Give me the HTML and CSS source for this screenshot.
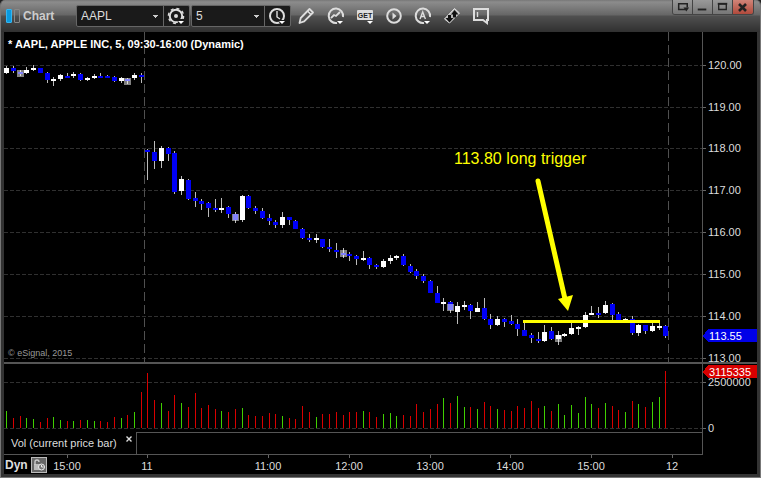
FILE: index.html
```html
<!DOCTYPE html>
<html lang="en">
<head>
  <meta charset="UTF-8">
  <meta name="viewport" content="width=device-width, initial-scale=1.0">
  <title>Chart</title>
  <link rel="stylesheet" href="styles.css">
</head>
<body>
  <div class="window">
    <header class="titlebar">
      <span class="logo"><i class="bar-on"></i><i class="bar-off"></i></span>
      <h1>Chart</h1>

      <div class="group symbol">
        <select aria-label="Symbol"><option>AAPL</option></select>
        <button type="button" aria-label="Settings">
          <svg viewBox="0 0 20 20"><circle cx="9" cy="9" r="6.2" fill="none" stroke="#ddd" stroke-width="2"/><circle cx="9" cy="9" r="7.6" fill="none" stroke="#ddd" stroke-width="1.4" stroke-dasharray="3 3"/><circle cx="9" cy="9" r="2" fill="#ddd"/><path d="M10 12h9v4l-3 3h-4z" fill="#1a1a1a"/><path d="M11 14h6l-3 3z" fill="#fff"/></svg>
        </button>
      </div>
      <div class="group interval">
        <select aria-label="Interval"><option>5</option></select>
        <button type="button" aria-label="Time template">
          <svg viewBox="0 0 20 20"><circle cx="9" cy="9" r="7" fill="none" stroke="#ddd" stroke-width="2"/><path d="M9 4v6l3 2" fill="none" stroke="#ddd" stroke-width="1.4"/><path d="M10 13h9v3l-3 3h-3z" fill="#1a1a1a"/><path d="M11 14h6l-3 3z" fill="#fff"/></svg>
        </button>
      </div>

      <nav class="tools">
        <button type="button" aria-label="Draw">
          <svg viewBox="0 0 20 20"><path d="M2.500 17l1.200-5L12.500 3l3.500 3.500-8.800 8.800z" fill="#555" stroke="#ddd" stroke-width="1.800" stroke-linejoin="round"/><path d="M10.500 5l3.500 3.500" stroke="#ddd" stroke-width="1.600"/></svg>
        </button>
        <button type="button" aria-label="Studies">
          <svg viewBox="0 0 20 20"><path d="M11 16.900A7.200 7.200 0 1 1 17 11" fill="none" stroke="#ddd" stroke-width="2"/><path d="M5 12l3-3 2 1 4-4" fill="none" stroke="#ddd" stroke-width="1.800"/><path d="M11 15h6l-3 3z" fill="#fff"/></svg>
        </button>
        <button type="button" aria-label="Get">
          <svg viewBox="0 0 20 20"><rect x="2" y="4" width="16" height="10" rx="1" fill="#ddd"/><text x="10" y="12" text-anchor="middle" class="get">GET</text><path d="M12 15h6l-3 3z" fill="#fff"/></svg>
        </button>
        <button type="button" aria-label="Play">
          <svg viewBox="0 0 20 20"><circle cx="10" cy="10" r="6.800" fill="none" stroke="#ddd" stroke-width="2"/><path d="M8.500 6.500v7l4-3.500z" fill="#ddd"/></svg>
        </button>
        <button type="button" aria-label="Alerts">
          <svg viewBox="0 0 20 20"><path d="M11 16.900A7.200 7.200 0 1 1 17 11" fill="none" stroke="#ddd" stroke-width="2"/><path d="M7 13l2.700-7 2.700 7M8 10.500h3.500" fill="none" stroke="#ddd" stroke-width="1.400"/><path d="M11 15h6l-3 3z" fill="#fff"/></svg>
        </button>
        <button type="button" aria-label="Trade">
          <svg viewBox="0 0 20 20"><path d="M2.500 13L12.500 2.500l5 4.500L7.500 17z" fill="#bbb" stroke="#ddd"/><path d="M12.500 4l4 4.500h-2.500v3h-3v-3H9zM7.500 16.500L3.500 12H6V9h3v3h2.500z" fill="#111"/></svg>
        </button>
        <button type="button" aria-label="Notes">
          <svg viewBox="0 0 20 20"><path d="M3 3h14v11h-1v3l-4-3H3z" fill="none" stroke="#ddd" stroke-width="2"/><path d="M6.500 6v5" stroke="#ddd" stroke-width="1.400"/></svg>
        </button>
      </nav>

      <div class="window-buttons">
        <button type="button" aria-label="Dock"><svg viewBox="0 0 20 14"><path d="M13 10H6V4h9v4" fill="none" stroke="#222" stroke-width="1.600"/><path d="M11 8h6l-3 4z" fill="#222"/></svg></button>
        <button type="button" aria-label="Minimize"><svg viewBox="0 0 20 14"><path d="M5 10h9" stroke="#222" stroke-width="2"/></svg></button>
        <button type="button" aria-label="Maximize"><svg viewBox="0 0 20 14"><path d="M6 4h8v6H6z" fill="none" stroke="#222" stroke-width="1.400"/><path d="M5 4h10" stroke="#222" stroke-width="2"/></svg></button>
        <button type="button" class="close" aria-label="Close"><svg viewBox="0 0 20 14"><path d="M6 4l7 7M13 4l-7 7" stroke="#222" stroke-width="2.600"/></svg></button>
      </div>
    </header>

    <main class="chart">
      <div class="pane price-pane">
        <svg id="price"></svg>
        <h2>* AAPL, APPLE INC, 5, 09:30-16:00 (Dynamic)</h2>
        <small>© eSignal, 2015</small>
      </div>
      <div class="axis price-axis"><svg id="priceAxis"></svg></div>

      <div class="pane volume-pane"><svg id="volume"></svg></div>
      <div class="axis"><svg id="volumeAxis"></svg></div>

      <div class="tabs">
        <div class="tab">Vol (current price bar)<button type="button" aria-label="Close tab"><svg viewBox="0 0 6 6"><path d="M.5.500l5 5M5.500.500l-5 5" stroke="#ddd" stroke-width="1.400"/></svg></button></div>
        <div class="tab-rest"></div>
      </div>
      <div class="axis"></div>

      <div class="time">
        <svg id="timeAxis"></svg>
        <div class="mode">
          <b>Dyn</b>
          <button type="button" aria-label="Lock time"><svg viewBox="0 0 14 14"><path d="M2 6h7v6H2z" fill="#bbb"/><path d="M3 7V4q0-2 2-2t2 2" fill="none" stroke="#ccc" stroke-width="1.400"/><circle cx="9.500" cy="9" r="3" fill="#777" stroke="#eee"/><path d="M9.500 7v2h2" fill="none" stroke="#eee"/></svg></button>
        </div>
      </div>
    </main>
  </div>
  <script src="chart.js"></script>
</body>
</html>
```

FILE: styles.css
```css
* {
  box-sizing: border-box;
}

body {
  margin: 0;
  background: #222;
  color: #ddd;
  font-family: "Liberation Sans", Arial, sans-serif;
  font-size: 11px;
}

h1, h2 {
  margin: 0;
}

button, select {
  margin: 0;
  padding: 0;
  border: 0;
  background: none;
  color: inherit;
  font-family: inherit;
}

svg {
  display: block;
}

.window {
  display: flex;
  flex-direction: column;
  height: 100vh;
  overflow: hidden;
  border-radius: 5px 5px 0 0;
  background: #333;
  border: 1px solid #777;
  border-top: 0;
}

/* title bar */
.titlebar {
  display: flex;
  align-items: center;
  flex: none;
  height: 32px;
  padding: 0 6px 0 5px;
  background: linear-gradient(#777 0, #8c8c8c 2px, #666 15px, #505050 16px, #303030 32px);
}

.logo {
  display: flex;
  gap: 2px;
}

.logo i {
  width: 6px;
  height: 14px;
  border: 1px solid #888;
  border-radius: 1px;
}

.logo .bar-on {
  background: #0a9ae0;
  border-color: #35b5f0;
}

.titlebar h1 {
  width: 56px;
  padding-left: 3px;
  font-size: 12px;
  color: #ccc;
}

.group {
  display: flex;
  height: 22px;
  margin-right: 1px;
  border: 1px solid #666;
  border-radius: 2px;
  background: #1a1a1a;
}

.symbol {
  width: 114px;
}

.interval {
  width: 100px;
}

.group select {
  flex: 1;
  min-width: 0;
  padding-left: 4px;
  appearance: none;
  font-size: 12px;
  background: linear-gradient(#ccc, #ccc) no-repeat right 5px top 9px / 5px 1px,
    linear-gradient(#ccc, #ccc) no-repeat right 6px top 10px / 3px 1px,
    linear-gradient(#ccc, #ccc) no-repeat right 7px top 11px / 1px 1px;
}

.group button {
  width: 26px;
  padding: 1px 0 0 3px;
  border-left: 1px solid #666;
}

.group svg, .tools svg {
  width: 20px;
  height: 20px;
}

.tools {
  display: flex;
}

.tools button {
  display: grid;
  place-items: center;
  width: 29px;
  height: 22px;
}

.get {
  font: bold 7px "Liberation Sans", Arial, sans-serif;
  fill: #222;
}

.window-buttons {
  display: flex;
  align-self: flex-start;
  margin-left: auto;
  border: 1px solid #444;
  border-top: 0;
  border-radius: 0 0 3px 3px;
  overflow: hidden;
}

.window-buttons button {
  width: 20px;
  height: 14px;
  background: linear-gradient(#999, #777);
  border-right: 1px solid #444;
}

.window-buttons .close {
  background: linear-gradient(#d08478, #b04a3c);
  border-right: 0;
}

/* chart */
.chart {
  display: grid;
  grid-template-columns: 1fr 55px;
  grid-template-rows: 1fr 68px 23px 19px;
  flex: 1;
  min-height: 0;
  margin: 0 3px 3px;
  background: #000;
}

.chart > div {
  position: relative;
  min-width: 0;
  min-height: 0;
}

.pane svg, .axis svg, .time > svg {
  position: absolute;
  inset: 0;
  width: 100%;
  height: 100%;
  overflow: visible;
  shape-rendering: crispEdges;
}

.price-pane, .price-axis {
  border-bottom: 2px solid #555;
}

.price-pane {
  display: flex;
  flex-direction: column;
  justify-content: space-between;
  padding: 6px 4px 2px;
}

.price-pane h2, .price-pane small {
  position: relative;
  font-size: 11px;
  line-height: 13px;
}

.price-pane h2 {
  color: #fff;
}

.price-pane small {
  font-size: 9px;
  color: #999;
}

.axis {
  border-left: 1px solid #555;
}

.tabs {
  display: flex;
  border-bottom: 1px solid #555;
}

.tab {
  display: flex;
  gap: 9px;
  width: 132px;
  padding-left: 7px;
  line-height: 22px;
  white-space: nowrap;
}

.tab svg {
  width: 6px;
  height: 6px;
}

.tab button {
  height: 14px;
}

.tab-rest {
  flex: 1;
  border-top: 1px solid #555;
  border-left: 1px solid #555;
}

.time {
  grid-column: span 2;
}

.mode {
  display: flex;
  align-items: center;
  gap: 3px;
  height: 19px;
  padding-left: 1px;
  position: relative;
  width: 44px;
  font-size: 12px;
}

.mode button {
  width: 16px;
  height: 16px;
  border: 1px solid #bbb;
  background: #666;
}

text {
  font-size: 11px;
  fill: #ddd;
}

.grid {
  stroke: #303030;
  stroke-dasharray: 4 2;
}

.session {
  stroke: #505050;
  stroke-dasharray: 9 4;
}

.tick {
  stroke: #666;
}

.wick {
  fill: #bbb;
}

.w {
  fill: #fff;
}

.b {
  fill: #0000f5;
}

.marker {
  fill: #fff;
  fill-opacity: 0.5;
}

.r {
  fill: #d80000;
}

.g {
  fill: #40d000;
}

.level {
  fill: #ff0;
}

.arrow {
  fill: #ff0;
  stroke: #ff0;
  stroke-width: 5;
  stroke-linecap: round;
  shape-rendering: auto;
}

.arrow-head {
  fill: #ff0;
  shape-rendering: auto;
}

.note {
  font-size: 16px;
  fill: #ff0;
}

.tag-text {
  fill: #fff;
}

.tag-blue {
  fill: #0000e8;
}

.tag-red {
  fill: #d80000;
}
```

FILE: chart.js
```js
// chart units: x runs 4..702, price pane y 32..362, volume pane y 364..432
// each candle: high, top, bottom, low, color, optional marker top
const candles = [
  [66,68,73,74,'w'], [66,68,71,73,'b'], [70,72,74,76,'b',70], [67,70,73,74,'w'], [65,68,70,71,'w'],
  [68,68,73,73,'b'], [72,73,80,83,'b'], [77,79,81,86,'w'], [74,75,79,81,'w'], [73,76,78,78,'b'],
  [72,74,76,78,'w'], [73,74,80,81,'b'], [77,78,80,81,'w'], [74,76,78,79,'w'], [73,76,78,78,'b'],
  [75,76,78,78,'b'], [76,77,81,82,'b'], [77,78,81,83,'w'], [78,79,81,84,'b',78], [73,75,78,80,'w'],
  [73,75,77,83,'b'], [149,150,152,180,'b'], [141,152,161,169,'b'], [146,148,161,168,'w'], [147,148,154,161,'b'],
  [151,153,192,194,'b'], [176,179,191,195,'w'], [179,180,199,200,'b'], [192,198,201,207,'b'], [199,201,204,210,'b'],
  [202,203,208,217,'b'], [199,208,210,212,'b'], [198,208,210,213,'w'], [206,207,214,218,'b'], [212,214,220,223,'b',214],
  [195,196,220,222,'w'], [195,196,208,209,'b'], [206,208,211,214,'b'], [208,211,218,219,'b'], [214,218,221,225,'b'],
  [220,222,225,228,'b'], [212,217,225,228,'w'], [217,217,220,225,'b'], [220,221,229,229,'b'], [228,229,238,239,'b'],
  [234,238,240,242,'b'], [234,238,240,243,'w'], [239,239,247,248,'b'], [239,247,249,252,'b'], [243,250,252,258,'b'],
  [248,253,255,258,'b',250], [252,254,256,261,'b'], [255,256,259,265,'b'], [251,258,260,261,'w'], [257,258,265,269,'b'],
  [264,265,267,269,'b'], [259,261,267,268,'w'], [255,258,261,264,'w'], [255,256,258,260,'w'], [254,256,265,266,'b'],
  [264,266,272,273,'b'], [269,271,276,279,'b'], [274,276,281,283,'b'], [280,281,293,293,'b'], [286,293,303,303,'b'],
  [298,302,304,311,'w'], [301,302,310,313,'b',304], [302,306,312,324,'w'], [301,305,307,310,'w'], [304,305,311,319,'b'],
  [302,308,312,312,'w'], [298,308,319,320,'b'], [314,319,325,329,'b'], [316,319,325,326,'w'], [318,319,322,327,'b'],
  [315,321,324,325,'b'], [319,324,329,336,'b'], [322,330,336,336,'b'], [333,335,338,343,'b'], [332,339,341,343,'b'],
  [325,332,341,342,'w'], [327,331,339,340,'b'], [331,335,339,345,'w',335], [333,334,336,337,'w'], [322,328,334,335,'w'],
  [326,327,329,335,'w'], [312,315,327,328,'w'], [306,313,315,315,'w'], [307,313,315,318,'b'], [301,305,313,314,'w'],
  [303,304,315,320,'b'], [312,314,320,320,'b'], [318,319,321,321,'w'], [316,319,333,335,'b'], [324,325,333,336,'w'],
  [325,325,331,334,'b'], [323,326,331,332,'w'], [323,326,328,330,'w'], [325,326,336,338,'b']
];

const volumeTops = [
  411,418,416,418,419,422,418,417,420,421,421,420,420,421,421,422,417,418,415,412,392,
  373,400,403,411,395,403,407,393,408,405,409,411,412,409,408,415,416,416,413,414,416,
  418,419,406,412,417,414,414,412,415,412,412,411,412,417,414,413,416,415,416,404,412,
  409,404,398,403,396,407,407,409,402,406,409,410,411,406,408,401,408,406,411,404,415,
  405,413,397,404,408,403,406,410,412,401,404,407,402,397,371
];
const volumeColors =
  'grrggrrggrgrggrrrgrgr' +
  'rrgrrgrrrrrgrrgrrrrrg' +
  'rrrrgrrrrrrgrrgggrrrr' +
  'rrgrggrgrrgrrrrrrgrgg' +
  'ggggrgrrgrgrggr';

const times = [[67, '15:00'], [147, '11'], [268, '11:00'], [349, '12:00'], [430, '13:00'], [510, '14:00'], [591, '15:00'], [672, '12']];
const prices = [[65, '120.00'], [107, '119.00'], [148, '118.00'], [190, '117.00'], [232, '116.00'], [274, '115.00'], [316, '114.00'], [358, '113.00']];
const volumes = [[382, '2500000'], [428, '0']];

function add(svg, name, attrs, text) {
  const el = document.createElementNS('http://www.w3.org/2000/svg', name);
  for (const key in attrs) el.setAttribute(key, attrs[key]);
  if (text) el.textContent = text;
  svg.appendChild(el);
}

function clear(id) {
  const svg = document.getElementById(id);
  svg.innerHTML = '';
  return svg;
}

function drawAxis(id, labels, y) {
  const svg = clear(id);
  labels.forEach(([v, label]) => {
    add(svg, 'line', { x1: 0, x2: 3, y1: y(v) + 0.5, y2: y(v) + 0.5, class: 'tick' });
    add(svg, 'text', { x: 5, y: y(v) + 4 }, label);
  });
  return svg;
}

function drawTag(svg, y, label, color) {
  add(svg, 'path', { d: `M0 ${y}L5 ${y - 7}H54V${y + 6}H5Z`, class: color });
  add(svg, 'text', { x: 6, y: y + 4, class: 'tag-text' }, label);
}

function draw() {
  const price = clear('price');
  const volume = clear('volume');
  const width = price.clientWidth;
  const height = price.clientHeight;
  const x = v => Math.round((v - 4) * width / 698);
  const y = v => Math.round((v - 32) * height / 330);
  const vy = v => v - 364;
  const barX = i => x(Math.round(6.2 + 6.726 * i));

  prices.forEach(([v]) => add(price, 'line', { x1: 0, x2: width, y1: y(v) + 0.5, y2: y(v) + 0.5, class: 'grid' }));
  [144, 668].forEach(v => add(price, 'line', { x1: x(v) + 0.5, x2: x(v) + 0.5, y1: 0, y2: height, class: 'session' }));

  candles.forEach(([high, top, bottom, low, color, marker], i) => {
    const cx = barX(i);
    add(price, 'rect', { x: cx, y: y(high), width: 1, height: y(low) - y(high), class: 'wick' });
    add(price, 'rect', { x: cx - 2, y: y(top), width: 5, height: y(bottom) - y(top), class: color });
    if (marker) add(price, 'rect', { x: cx - 3, y: y(marker), width: 7, height: 7, class: 'marker' });
  });

  add(price, 'rect', { x: x(523), y: y(320), width: x(660) - x(523), height: 3, class: 'level' });
  add(price, 'line', { x1: x(538), y1: y(181), x2: x(565), y2: y(299), class: 'arrow' });
  add(price, 'path', { d: `M${x(558)} ${y(299)}L${x(573)} ${y(295)}L${x(568)} ${y(311)}Z`, class: 'arrow-head' });
  add(price, 'text', { x: x(454), y: y(164), class: 'note' }, '113.80 long trigger');

  volumes.forEach(([v]) => add(volume, 'line', { x1: 0, x2: width, y1: vy(v) + 0.5, y2: vy(v) + 0.5, class: 'grid' }));
  volumeTops.forEach((top, i) => {
    add(volume, 'rect', { x: barX(i), y: vy(top), width: 1, height: 428 - top, class: volumeColors[i] });
  });

  drawTag(drawAxis('priceAxis', prices, y), y(336), '113.55', 'tag-blue');
  drawTag(drawAxis('volumeAxis', volumes, vy), vy(372), '3115335', 'tag-red');

  const time = clear('timeAxis');
  times.forEach(([v, label]) => {
    add(time, 'line', { x1: x(v) + 0.5, x2: x(v) + 0.5, y1: 0, y2: 3, class: 'tick' });
    add(time, 'text', { x: x(v), y: 15, 'text-anchor': 'middle' }, label);
  });
}

draw();
window.addEventListener('resize', draw);
```
